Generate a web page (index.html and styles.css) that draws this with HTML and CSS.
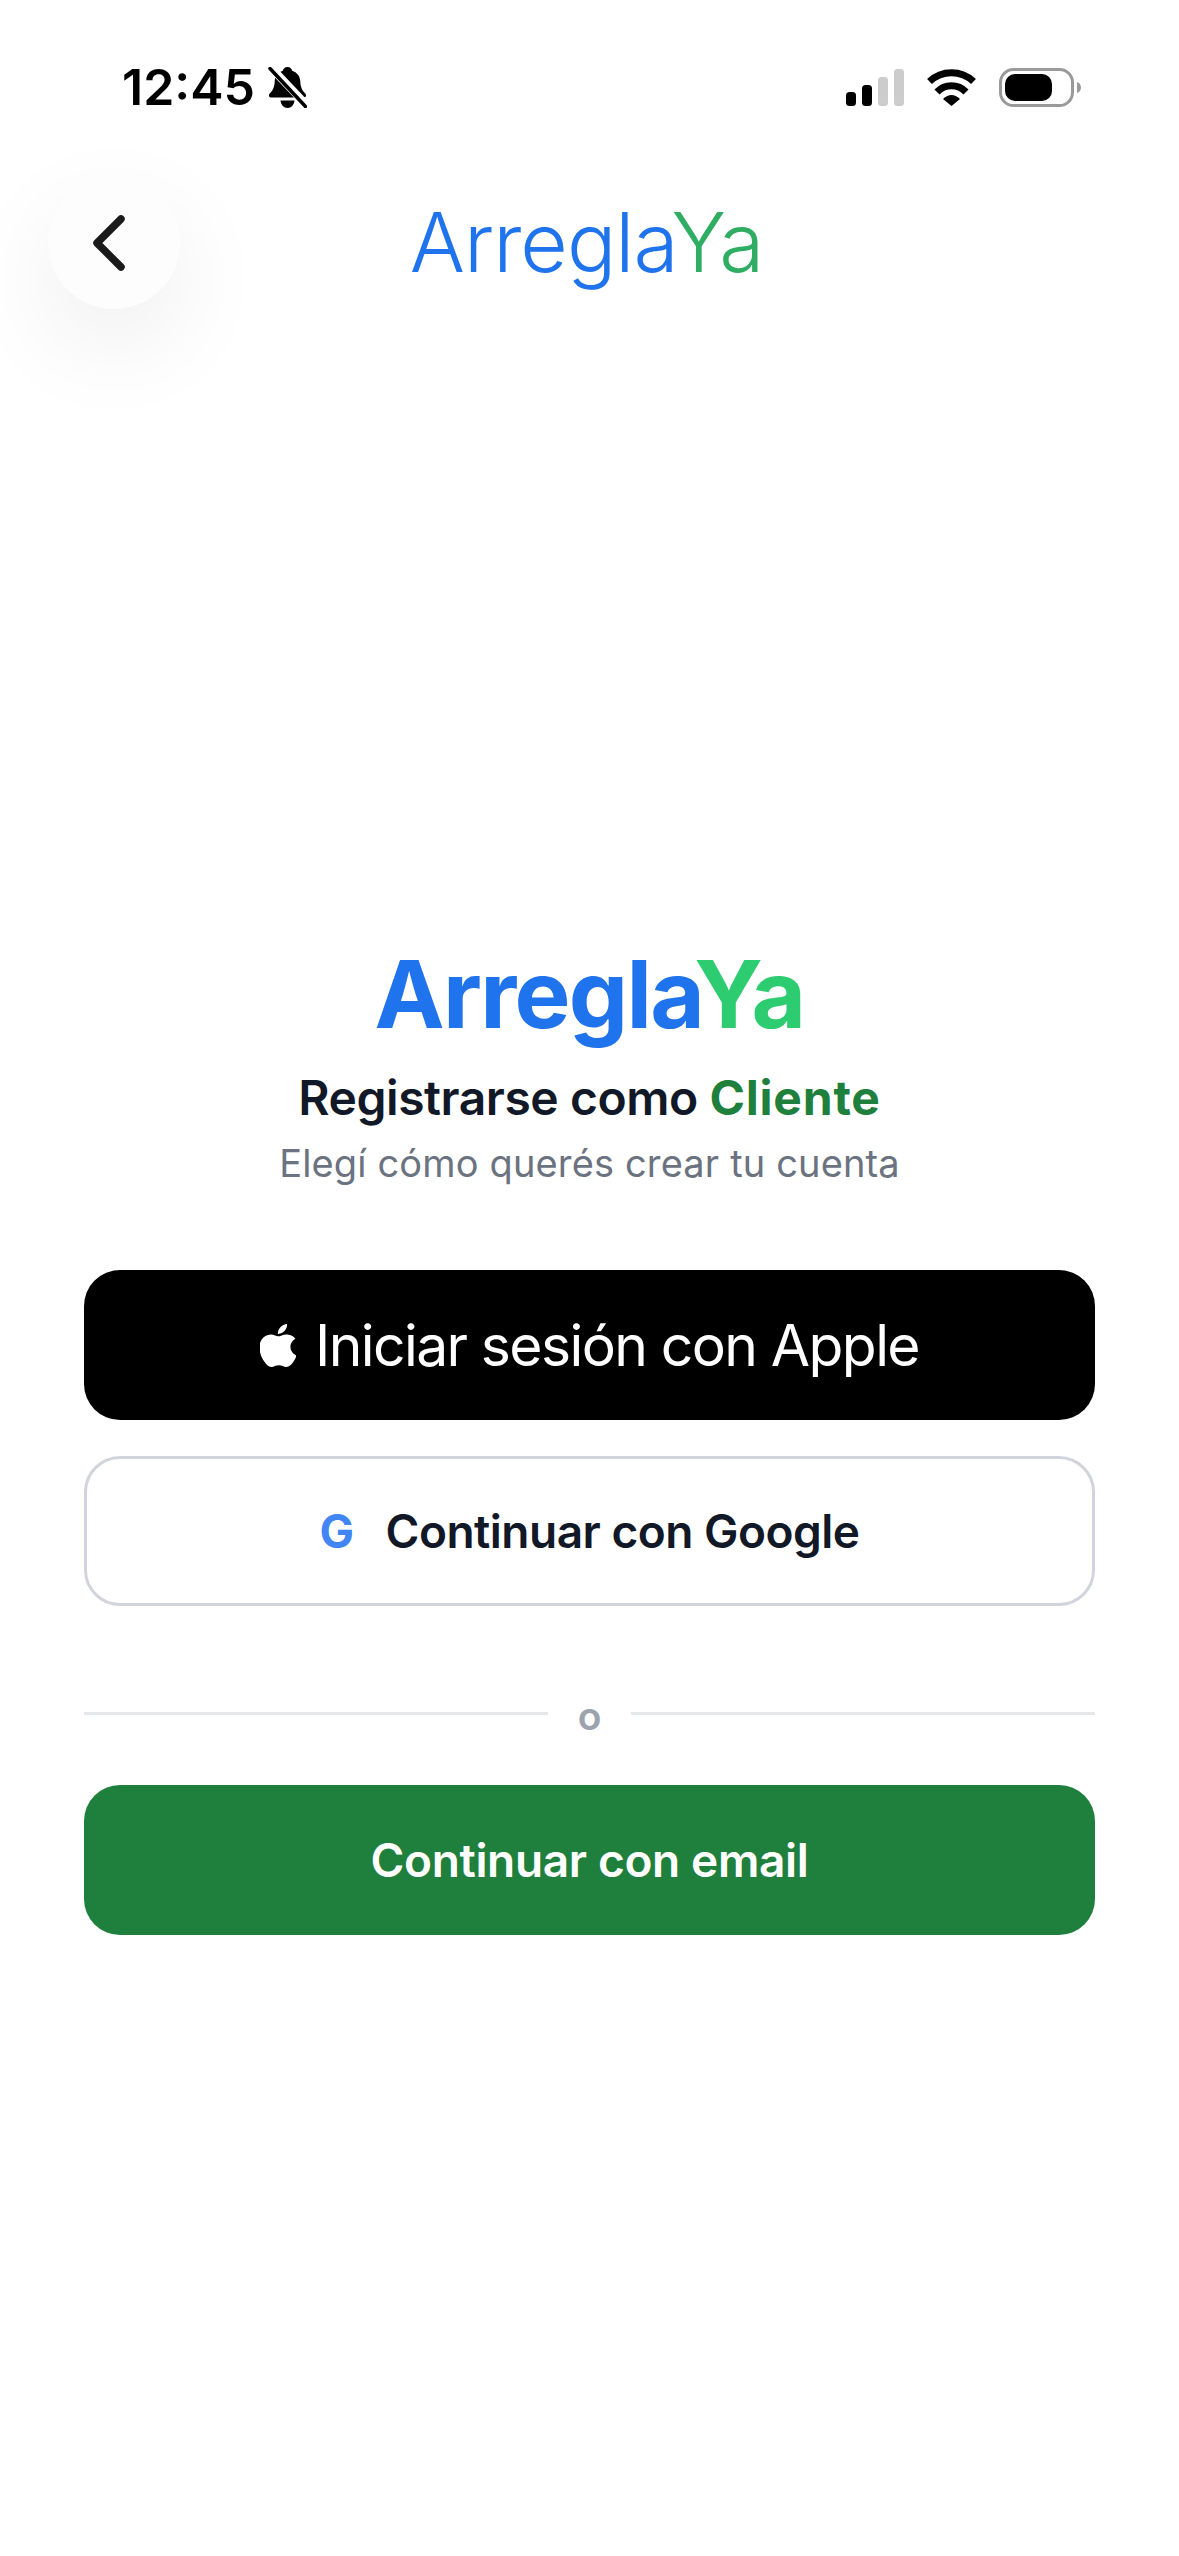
FILE: index.html
```html
<!DOCTYPE html>
<html lang="es">
<head>
<meta charset="utf-8">
<title>ArreglaYa</title>
<link rel="stylesheet" href="styles.css">
</head>
<body>
<div class="screen">
  <div class="status">
    <div class="status-left">
      <span class="time">12:45</span>
      <svg class="bell" width="39" height="41" viewBox="0 0 39 41">
        <path d="M19.500 0c2.800 0 4.300 1.800 4.600 3.800 5 1.500 7.900 5.400 8.200 10.600.3 5.600 1.500 8.600 5 12 1.500 1.600.6 4.100-1.600 4.100H3.300c-2.200 0-3.100-2.500-1.600-4.100 3.500-3.400 4.700-6.400 5-12 .3-5.200 3.200-9.100 8.200-10.600C15.200 1.800 16.700 0 19.500 0z" fill="#000"/>
        <path d="M12.500 33.500h14c-.4 4.500-3.300 7.500-7 7.500s-6.600-3-7-7.500z" fill="#000"/>
        <path d="M1 -1.500L39 38.500" stroke="#fff" stroke-width="8"/>
        <path d="M2 1.500L37.500 39.500" stroke="#000" stroke-width="3.500" stroke-linecap="round"/>
      </svg>
    </div>
    <div class="status-right">
      <svg width="58" height="37" viewBox="0 0 58 37">
        <rect x="0" y="23" width="10" height="14" rx="3.500" fill="#000"/>
        <rect x="16" y="16" width="10" height="21" rx="3.500" fill="#000"/>
        <rect x="32" y="8" width="10" height="29" rx="3.500" fill="#ccc"/>
        <rect x="48" y="0" width="10" height="37" rx="3.500" fill="#ccc"/>
      </svg>
      <svg width="51" height="37" viewBox="0 0 51 37">
        <path d="M3.500 12.500A32 32 0 0 1 47.500 12.500" fill="none" stroke="#000" stroke-width="7"/>
        <path d="M11 23A20 20 0 0 1 40 23" fill="none" stroke="#000" stroke-width="7"/>
        <path d="M17 30Q25.500 22 34 30L25.500 37Z" fill="#000"/>
      </svg>
      <svg class="battery" width="82" height="39" viewBox="0 0 82 39">
        <rect x="1.500" y="1.500" width="72" height="36" rx="13" fill="none" stroke="#9a9a9a" stroke-width="3"/>
        <rect x="6" y="6" width="47" height="27" rx="10" fill="#000"/>
        <path d="M78 14c2.500.8 4 3 4 5.500s-1.500 4.700-4 5.500z" fill="#9a9a9a"/>
      </svg>
    </div>
  </div>

  <header class="topbar">
    <button class="back" aria-label="Volver">
      <svg width="36" height="60" viewBox="0 0 36 60">
        <path d="M30 6L6 30L30 54" fill="none" stroke="#1a1a1a" stroke-width="7.500" stroke-linecap="round" stroke-linejoin="round"/>
      </svg>
    </button>
    <div class="brand-light"><span class="blue">Arregla</span><span class="green-soft">Ya</span></div>
    <span class="topbar-spacer"></span>
  </header>

  <main class="content">
    <h1 class="brand"><span class="blue">Arregla</span><span class="green-bright">Ya</span></h1>
    <h2 class="heading">Registrarse como <span class="client">Cliente</span></h2>
    <p class="sub">Elegí cómo querés crear tu cuenta</p>

    <div class="actions">
      <button class="btn btn-apple">
        <svg class="apple" width="36" height="43" viewBox="2.500 0 19 24" preserveAspectRatio="none">
          <path fill="#fff" d="M12.152 6.896c-.948 0-2.415-1.078-3.960-1.040-2.040.027-3.910 1.183-4.961 3.014-2.117 3.675-.546 9.103 1.519 12.090 1.013 1.454 2.208 3.090 3.792 3.039 1.520-.065 2.090-.987 3.935-.987 1.831 0 2.350.987 3.960.948 1.637-.026 2.676-1.480 3.676-2.948 1.156-1.688 1.636-3.325 1.662-3.415-.039-.013-3.182-1.221-3.220-4.857-.026-3.040 2.480-4.494 2.597-4.559-1.429-2.090-3.623-2.324-4.390-2.376-2-.156-3.675 1.090-4.610 1.090zM15.530 3.830c.843-1.012 1.400-2.427 1.245-3.830-1.207.052-2.662.805-3.532 1.818-.780.896-1.454 2.338-1.273 3.714 1.338.104 2.715-.688 3.559-1.701"/>
        </svg>
        <span>Iniciar sesión con Apple</span>
      </button>
      <button class="btn btn-google">
        <span class="g">G</span>
        <span>Continuar con Google</span>
      </button>
      <div class="divider"><span class="line"></span><span class="or">o</span><span class="line"></span></div>
      <button class="btn btn-email">Continuar con email</button>
    </div>
  </main>
</div>
</body>
</html>
```
FILE: styles.css
```css
* { box-sizing: border-box; }
html, body { margin: 0; padding: 0; background: #fff; }
body { font-family: Inter, "Liberation Sans", sans-serif; }
.screen { width: 1179px; height: 2556px; overflow: hidden; background: #fff; }

.status { display: flex; justify-content: space-between; align-items: flex-start; height: 177px; padding: 67px 98px 0 122px; }
.status-left { display: flex; align-items: center; gap: 13px; }
.time { font-size: 50px; font-weight: 600; line-height: 41px; color: #000; }
.bell { display: block; }
.status-right { display: flex; align-items: center; gap: 22px; margin-top: 1px; }
.status-right svg { display: block; }

.topbar { display: grid; grid-template-columns: 132px 1fr 132px; align-items: center; padding: 0 54px 0 48px; }
.back { width: 132px; height: 132px; border: 0; border-radius: 50%; background: #fdfdfd; padding: 0 10px 0 0; display: flex; align-items: center; justify-content: center; box-shadow: 0 36px 100px rgba(0,0,0,.07); }
.brand-light { text-align: center; font-size: 82px; font-weight: 300; line-height: 100px; letter-spacing: -1px; }
.blue { color: #1f73ed; }
.green-soft { color: #2fad62; }
.green-bright { color: #2ecc71; }

.content { display: flex; flex-direction: column; align-items: center; padding: 627px 84px 0; }
.brand { margin: 0; font-size: 94px; font-weight: 700; line-height: 116px; letter-spacing: -1.7px; }
.heading { margin: 16px 0 0; font-size: 48px; font-weight: 600; line-height: 60px; color: #111827; letter-spacing: -.45px; }
.client { color: #1f7f3c; font-weight: 700; letter-spacing: .8px; }
.sub { margin: 10px 0 0; font-size: 38px; line-height: 50px; color: #6b7280; font-weight: 400; letter-spacing: .15px; }

.actions { width: 100%; display: flex; flex-direction: column; margin-top: 82px; }
.btn { width: 100%; height: 150px; border-radius: 36px; border: 0; display: flex; align-items: center; justify-content: center; font-family: inherit; padding: 0; }
.btn-apple { background: #000; color: #fff; font-size: 57px; font-weight: 400; gap: 19px; letter-spacing: -1.6px; }
.btn-google { margin-top: 36px; background: #fff; border: 3px solid #d1d5db; color: #111827; font-size: 46px; font-weight: 600; gap: 32px; letter-spacing: -.5px; }
.g { color: #4285f4; font-weight: 700; font-size: 46px; }
.divider { display: flex; align-items: center; gap: 30px; margin-top: 87px; }
.line { flex: 1; height: 3px; background: #e5e7eb; }
.or { font-size: 39px; font-weight: 600; line-height: 40px; color: #9ca3af; position: relative; top: 3px; }
.btn-email { margin-top: 52px; background: #1f7f3c; color: #fff; font-size: 46px; font-weight: 600; letter-spacing: -.35px; }
```
